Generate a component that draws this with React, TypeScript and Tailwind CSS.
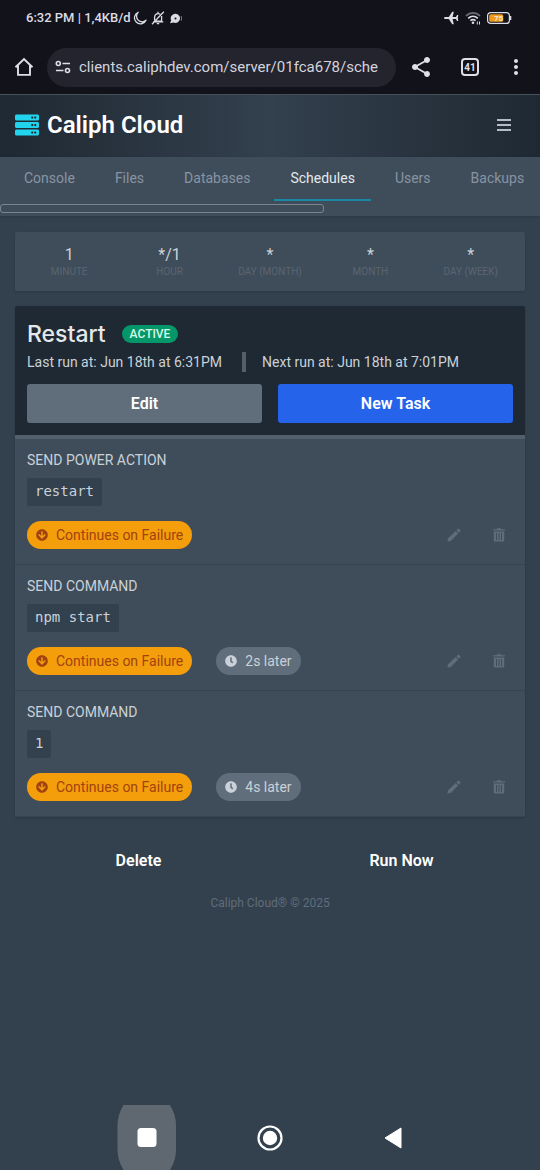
import type { ReactNode } from "react";
import { FaArrowCircleDown, FaClock, FaServer } from "react-icons/fa";
import { MdMoreVert, MdShare } from "react-icons/md";

const tabs = ["Console", "Files", "Databases", "Schedules", "Users", "Backups"];

const cron = [
  { value: "1", label: "MINUTE" },
  { value: "*/1", label: "HOUR" },
  { value: "*", label: "DAY (MONTH)" },
  { value: "*", label: "MONTH" },
  { value: "*", label: "DAY (WEEK)" },
];

const tasks = [
  { action: "SEND POWER ACTION", payload: "restart", delay: "" },
  { action: "SEND COMMAND", payload: "npm start", delay: "2s later" },
  { action: "SEND COMMAND", payload: "1", delay: "4s later" },
];

function StatusBar() {
  return (
    <div className="flex h-9 items-center justify-between pr-7 pl-[26px] text-[#dcdce4]">
      <div className="flex items-center">
        <span className="text-[13px] font-medium">6:32 PM | 1,4KB/d</span>
        <svg viewBox="0 0 14 14" className="ml-[2px] size-[14px]" fill="none" stroke="currentColor" strokeWidth="1.3" strokeLinejoin="round">
          <path d="M5.200 1.300A6 6 0 1 0 13 9.200 5.400 5.400 0 0 1 5.200 1.300Z" />
        </svg>
        <svg viewBox="0 0 14 14" className="ml-1 size-[14px]" fill="none" stroke="currentColor" strokeWidth="1.3">
          <path d="M3.6 9.6V6a3.5 3.5 0 0 1 5.6-2.7M10.6 5v5.2H4.6M2 10.9h10.3M7 .8v1.4M1 13.2 12.8.8M5.8 12.6h2.4" />
        </svg>
        <svg viewBox="0 0 14 14" className="ml-1 size-[13px]" fill="currentColor">
          <path fillRule="evenodd" d="M6.800 2a4.900 4.900 0 1 1-2 9.300L1 12.200l1.400-3A4.900 4.900 0 0 1 6.800 2ZM7 5.800a1.100 1.100 0 1 0 0 2.200 1.100 1.100 0 0 0 0-2.200Z" />
          <path d="M12.400 4.500q1.200 2.300 0 4.600l1.200.2q1-2.500 0-5Z" opacity=".5" />
        </svg>
      </div>
      <div className="flex items-center gap-[6px]">
        <svg viewBox="0 0 15 14" className="h-[14px] w-[15px]" fill="currentColor">
          <path d="M0 7q0-1.100 1.200-1.100h3.600L8.200.7h1.600L8.600 5.900h3.300l1.200-1.900h1.200L13.800 7l.5 3h-1.200l-1.200-1.900H8.600l1.200 5.200H8.200L4.800 8.100H1.200Q0 8.100 0 7Z" />
        </svg>
        <svg viewBox="0 0 16 14" className="h-[14px] w-4" fill="none" stroke="currentColor" strokeWidth="1.7">
          <path d="M1 4.800C5 .9 11 .9 15 4.800" opacity=".45" />
          <path d="M3.200 7.300c2.800-2.600 6.800-2.600 9.600 0M5.400 9.700c1.600-1.400 3.600-1.400 5.200 0" />
          <circle cx="8" cy="11.800" r="1.300" fill="currentColor" stroke="none" />
          <path d="M12.300 10.500v3M14.500 10.500v3" strokeWidth="1" />
        </svg>
        <svg viewBox="0 0 25 12" className="h-3 w-[25px]">
          <rect x=".6" y=".6" width="21.800" height="10.800" rx="3" fill="none" stroke="currentColor" strokeWidth="1.200" />
          <rect x="2.200" y="2.200" width="14" height="7.600" rx="1.500" fill="#f09a1a" />
          <path d="M23.600 4v4" stroke="currentColor" strokeWidth="1.400" />
          <text x="11.500" y="9" textAnchor="middle" fontSize="8" fontWeight="700" fill="#f4e8d8">75</text>
        </svg>
      </div>
    </div>
  );
}

function BrowserBar() {
  return (
    <div className="flex h-[58px] items-center pt-1 text-[#dfdfe8]">
      <button aria-label="Home" className="ml-[14px] shrink-0">
        <svg viewBox="0 0 20 20" className="size-5" fill="none" stroke="currentColor" strokeWidth="1.900">
          <path d="M1.500 10.300 10 2l8.500 8.300M4 8.400v9.500h12V8.400" />
        </svg>
      </button>
      <div className="ml-[13px] flex h-[39px] min-w-0 flex-1 items-center rounded-full bg-[#24242f] pr-2 pl-2">
        <svg viewBox="0 0 16 14" className="h-[14px] w-4 shrink-0" fill="none" stroke="currentColor" strokeWidth="1.600">
          <circle cx="3.300" cy="3.500" r="2" />
          <circle cx="12.500" cy="10.500" r="2" />
          <path d="M7.500 3.500H15M1 10.500h7.500" />
        </svg>
        <input aria-label="Address" readOnly value="clients.caliphdev.com/server/01fca678/sche" className="ml-2 min-w-0 flex-1 bg-transparent text-[15px] text-[#d3d3dd] outline-none" />
      </div>
      <button aria-label="Share" className="ml-[13px] shrink-0"><MdShare className="size-6" /></button>
      <button aria-label="Tabs" className="ml-7 flex size-[18px] shrink-0 items-center justify-center rounded-[4px] border-2 border-current text-[10px] font-bold">41</button>
      <button aria-label="More" className="mr-3 ml-[25px] shrink-0"><MdMoreVert className="size-6" /></button>
    </div>
  );
}

function PencilIcon() {
  return (
    <svg viewBox="0 0 14 14" className="size-[14px]" fill="currentColor">
      <path d="M.4 13.600 1 10.200 8.700 2.900l2.500 2.500L3.800 13ZM9.400 2.200l1.300-1.300q.7-.6 1.400 0l1.100 1.100q.6.700 0 1.400L11.900 4.700Z" />
    </svg>
  );
}

function TrashIcon() {
  return (
    <svg viewBox="0 0 12 14" className="h-[14px] w-3" fill="currentColor">
      <path fillRule="evenodd" d="M0 1.200h3.600L4.200.3h3.600l.6.900H12v1.400H0ZM.8 3.600h10.400V13.600H.8ZM3 5v7h1V5ZM5.500 5v7h1V5ZM8 5v7h1V5Z" />
    </svg>
  );
}

function Pill({ className, icon, children }: { className: string; icon: ReactNode; children: ReactNode }) {
  return (
    <span className={`flex h-7 items-center gap-2 rounded-full px-[9px] text-sm ${className}`}>
      {icon}
      {children}
    </span>
  );
}

export default function App() {
  return (
    <div className="flex min-h-screen flex-col bg-[#33404d] font-[Roboto,sans-serif] text-[#cad1d8]">
      <div className="bg-[#12121b]">
        <StatusBar />
        <BrowserBar />
      </div>
      <header className="flex h-[63px] items-center justify-between border-t border-[#46505a] bg-linear-to-r from-[#1f2933] via-[#33404d] to-[#1f2933] px-[15px] pb-[2px]">
        <a href="#home" className="flex items-center gap-2 text-2xl font-semibold text-white">
          <FaServer className="size-6 text-[#22d3ee]" />
          Caliph Cloud
        </a>
        <button aria-label="Menu" className="px-[14px] text-[#b4bcc6]">
          <svg viewBox="0 0 14 14" className="size-[14px]" fill="none" stroke="currentColor" strokeWidth="2">
            <path d="M0 2h14M0 7h14M0 12h14" />
          </svg>
        </button>
      </header>
      <nav className="overflow-hidden bg-[#3f4d5a] pb-[3px] shadow">
        <div className="flex w-max gap-2 pl-2 text-sm text-[#8894a3]">
          {tabs.map((t) => (
            <a
              key={t}
              href={`#${t.toLowerCase()}`}
              className={
                t === "Schedules"
                  ? "flex h-11 items-center border-b-2 border-[#1a88a3] px-4 text-[#e4e8ec]"
                  : "flex h-11 items-center border-b-2 border-transparent px-4"
              }
            >
              {t}
            </a>
          ))}
        </div>
        <div className="mt-[3px] h-[9px] w-3/5 rounded-[3px] border border-[#7a8590]" />
      </nav>

      <main className="flex flex-col px-[15px] pt-4">
        <section className="grid grid-cols-5 rounded-xs bg-[#3f4d5a] px-1 py-[13px] text-center shadow">
          {cron.map((c) => (
            <div key={c.label}>
              <p className="text-base leading-5">{c.value}</p>
              <p className="text-[10px] leading-[13px] text-[#596572]">{c.label}</p>
            </div>
          ))}
        </section>

        <section className="mt-[15px] overflow-hidden rounded-xs bg-[#3f4d5a] shadow">
          <div className="border-b-4 border-[#535f6b] bg-[#1f2933] px-3 pt-3 pb-3">
            <div className="flex items-center gap-4">
              <h1 className="font-[Inter,sans-serif] text-[23px] leading-8 font-medium text-[#e4e8ec]">Restart</h1>
              <span className="rounded-full bg-[#059669] px-2 text-xs leading-[18px] font-medium text-[#d1fae5]">ACTIVE</span>
            </div>
            <div className="flex h-6 items-center text-sm">
              <span>Last run at: Jun 18th at 6:31PM</span>
              <span className="ml-5 border-l-4 border-[#535f6b] py-[2px] pl-4 leading-4">Next run at: Jun 18th at 7:01PM</span>
            </div>
            <div className="mt-[10px] grid grid-cols-2 gap-4 text-base font-semibold text-white">
              <button className="h-[39px] rounded-[3px] bg-[#606d7b]">Edit</button>
              <button className="h-[39px] rounded-[3px] bg-[#2563eb]">New Task</button>
            </div>
          </div>
          <ul>
            {tasks.map((t, i) => (
              <li key={i} className="h-[126px] border-b border-[#37444f] px-3 pt-[11px]">
                <p className="text-sm leading-5">{t.action}</p>
                <code className="mt-2 block h-7 w-max rounded-xs bg-[#33404d] px-2 font-['DejaVu_Sans_Mono',monospace] text-sm leading-[26px]">{t.payload}</code>
                <div className="mt-[15px] flex items-center">
                  <Pill className="bg-[#f59e0b] text-[#a04310]" icon={<FaArrowCircleDown className="size-3" />}>Continues on Failure</Pill>
                  {t.delay && (
                    <Pill className="ml-6 bg-[#606d7b]" icon={<FaClock className="size-3" />}>{t.delay}</Pill>
                  )}
                  <div className="mr-2 ml-auto flex items-center gap-8 text-[#5f6c79]">
                    <button aria-label="Edit task"><PencilIcon /></button>
                    <button aria-label="Delete task"><TrashIcon /></button>
                  </div>
                </div>
              </li>
            ))}
          </ul>
        </section>

        <div className="mt-6 grid grid-cols-2 gap-4 text-base font-semibold text-white">
          <button className="h-10">Delete</button>
          <button className="h-10">Run Now</button>
        </div>
        <footer className="mt-[14px] text-center text-xs leading-4 text-[#606d7b]">Caliph Cloud® © 2025</footer>
      </main>

      <div className="mt-auto flex h-[65px] items-center justify-center gap-20 text-white">
        <button aria-label="Recent apps">
          <svg viewBox="0 0 60 65" className="h-[65px] w-[60px]">
            <path d="M6.500 0h46.500Q59 10 59 20v25q0 10-6 20H6.500Q.5 55 .5 45V20Q.5 10 6.500 0Z" fill="#5f6871" />
            <rect x="20.500" y="23" width="19" height="19" rx="3.500" fill="currentColor" />
          </svg>
        </button>
        <button aria-label="Home screen">
          <svg viewBox="0 0 26 26" className="size-[26px]">
            <circle cx="13" cy="13" r="11.500" fill="none" stroke="currentColor" strokeWidth="2.200" />
            <circle cx="13" cy="13" r="7.200" fill="currentColor" />
          </svg>
        </button>
        <button aria-label="Back" className="flex w-[60px] justify-center">
          <svg viewBox="0 0 18 22" className="h-[22px] w-[18px]" fill="currentColor" stroke="currentColor" strokeLinejoin="round">
            <path d="M1 11 17 1v20Z" />
          </svg>
        </button>
      </div>
    </div>
  );
}
